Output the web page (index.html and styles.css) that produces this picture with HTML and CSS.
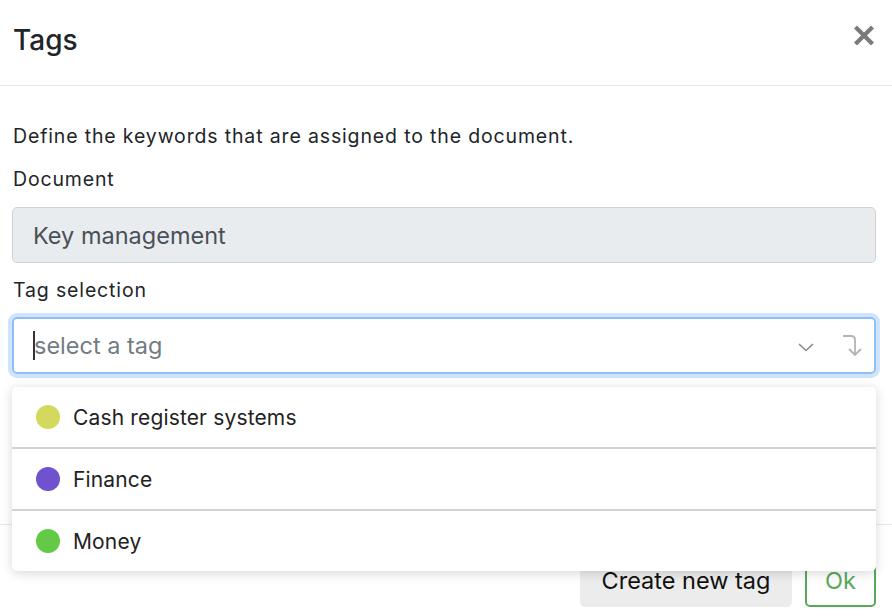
FILE: index.html
```html
<!DOCTYPE html>
<html lang="en">
<head>
    <meta charset="UTF-8">
    <meta name="viewport" content="width=device-width, initial-scale=1.0">
    <title>Tags</title>
    <link rel="stylesheet" href="styles.css">
</head>
<body>
    <div class="modal">
        <div class="modal-header">
            <h1 class="modal-title">Tags</h1>
            <button class="close-btn" aria-label="Close">
                <svg width="20" height="19" viewBox="0 0 20 19">
                    <path d="M3 2.5 L17 16.5 M17 2.5 L3 16.5" stroke="#7a7a7a" stroke-width="4.2" stroke-linecap="square"/>
                </svg>
            </button>
        </div>

        <div class="modal-body">
            <p class="intro">Define the keywords that are assigned to the document.</p>

            <label class="field-label">Document</label>
            <div class="form-control disabled">Key management</div>

            <label class="field-label tag-label">Tag selection</label>
            <div class="select-wrap">
                <div class="form-control select-box">
                    <span class="caret"></span>
                    <span class="placeholder">select a tag</span>
                    <span class="select-icons">
                        <!-- dropdown chevron -->
                        <svg width="18" height="12" viewBox="0 0 18 12">
                            <path d="M2 3 L9 9.5 L16 3" fill="none" stroke="#8a8a8a" stroke-width="1.6"/>
                        </svg>
                        <!-- enter / return arrow -->
                        <svg width="22" height="23" viewBox="0 0 22 23">
                            <path d="M1 2 H9 Q13 2 13 6 V21" fill="none" stroke="#b3b3b3" stroke-width="1.8"/>
                            <path d="M7 15 L13 21 L19 15" fill="none" stroke="#b3b3b3" stroke-width="1.8"/>
                        </svg>
                    </span>
                </div>

                <ul class="dropdown">
                    <li class="dropdown-item"><span class="dot dot-yellow"></span>Cash register systems</li>
                    <li class="dropdown-item"><span class="dot dot-purple"></span>Finance</li>
                    <li class="dropdown-item"><span class="dot dot-green"></span>Money</li>
                </ul>
            </div>
        </div>

        <div class="modal-footer">
            <button class="btn btn-secondary">Create new tag</button>
            <button class="btn btn-ok">Ok</button>
        </div>
    </div>
</body>
</html>
```

FILE: styles.css
```css
body {
    margin: 0;
    font-family: Inter, "Noto Sans", sans-serif;
    color: #212529;
    background-color: #fff;
}
.modal {
    width: 892px;
    height: 616px;
    overflow: hidden;
}
.modal-header {
    height: 85px;
    border-bottom: 1px solid #e6e8eb;
    display: flex;
    align-items: center;
    justify-content: space-between;
    padding: 0 18px 0 13px;
}
.modal-title {
    margin: 0;
    font-size: 28px;
    font-weight: 500;
    margin-top: -6px;
}
.close-btn {
    background: none;
    border: none;
    padding: 0;
    margin-top: -14px;
    cursor: pointer;
    display: flex;
}
.modal-body {
    padding: 37px 16px 150px 12px;
}
.intro {
    margin: 0 0 16px 1px;
    font-size: 19.5px;
    letter-spacing: 0.85px;
    line-height: 27px;
}
.field-label {
    display: block;
    margin-left: 1px;
    font-size: 19.5px;
    letter-spacing: 0.85px;
    line-height: 27px;
    margin-bottom: 14px;
}
.tag-label {
    margin-top: 14px;
    margin-bottom: 13px;
}
.form-control {
    box-sizing: border-box;
    height: 57px;
    border: 1px solid #cfd3d8;
    border-radius: 5px;
    padding: 0 20px;
    display: flex;
    align-items: center;
    font-size: 23.5px;
}
.disabled {
    height: 56px;
    background-color: #e9ecef;
    color: #495057;
}
.select-wrap {
    position: relative;
}
.select-box {
    border: 2px solid #8fbff5;
    box-shadow: 0 0 0 4px #d0e3fc;
    padding-left: 19px;
    padding-right: 10px;
}
.caret {
    width: 2px;
    height: 29px;
    background-color: #333;
    margin-right: -1px;
}
.placeholder {
    color: #737b83;
    flex: 1;
}
.select-icons {
    display: flex;
    align-items: center;
    gap: 27px;
}
.select-icons svg:first-child {
    margin-top: 2px;
}
.dropdown {
    position: absolute;
    top: 70px;
    left: 0;
    right: 0;
    margin: 0;
    padding: 0;
    list-style: none;
    background-color: #fff;
    border-radius: 5px;
    box-shadow: 0 2px 12px rgba(0, 0, 0, 0.16);
    z-index: 10;
}
.dropdown-item {
    height: 60px;
    display: flex;
    align-items: center;
    padding-left: 24px;
    font-size: 21px;
    letter-spacing: 0.15px;
    color: #222;
}
.dropdown-item + .dropdown-item {
    border-top: 2px solid #d2d2d2;
}
.dot {
    width: 24px;
    height: 24px;
    border-radius: 50%;
    margin-right: 13px;
}
.dot-yellow {
    background-color: #d3d95c;
}
.dot-purple {
    background-color: #7052d0;
}
.dot-green {
    background-color: #63c947;
}
.modal-footer {
    border-top: 1px solid #e6e8eb;
    display: flex;
    justify-content: flex-end;
    gap: 13px;
    padding: 28px 16px 0 0;
}
.btn {
    box-sizing: border-box;
    height: 54px;
    border-radius: 5px;
    font-family: inherit;
    font-size: 23.5px;
    padding: 0 20px;
    cursor: pointer;
}
.btn-secondary {
    background-color: #ececec;
    border: none;
    color: #111;
    width: 212px;
}
.btn-ok {
    background-color: #fff;
    border: 2px solid #59a95a;
    color: #59a95a;
    width: 71px;
    padding: 0;
}
```
